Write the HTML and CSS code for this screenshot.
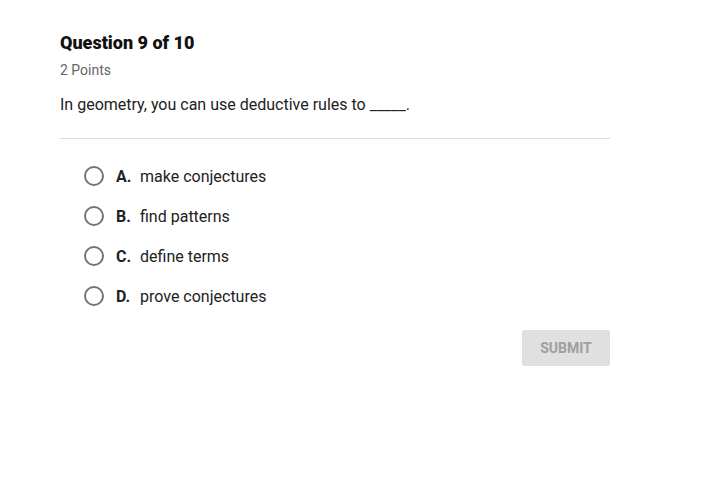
FILE: index.html
```html
<!DOCTYPE html>
<html>
<head>
<meta charset="utf-8">
<link rel="stylesheet" href="styles.css">
</head>
<body>
<div class="quiz">
  <h1 class="title">Question 9 of 10</h1>
  <div class="points">2 Points</div>
  <p class="prompt">In geometry, you can use deductive rules to _____.</p>
  <hr class="divider">
  <ul class="options">
    <li class="option"><span class="radio"></span><span class="letter">A.</span><span class="text">make conjectures</span></li>
    <li class="option"><span class="radio"></span><span class="letter">B.</span><span class="text">find patterns</span></li>
    <li class="option"><span class="radio"></span><span class="letter">C.</span><span class="text">define terms</span></li>
    <li class="option"><span class="radio"></span><span class="letter">D.</span><span class="text">prove conjectures</span></li>
  </ul>
  <div class="actions"><button class="submit">SUBMIT</button></div>
</div>
</body>
</html>
```
FILE: styles.css
```css
html, body { margin: 0; padding: 0; background: #fff; }
body { font-family: Roboto, "Liberation Sans", sans-serif; color: #212121; }
.quiz { width: 550px; padding: 32px 0 0 60px; }
.title { margin: 0; font-size: 18px; font-weight: 900; line-height: 22px; color: #111; }
.points { margin-top: 6px; font-size: 14px; line-height: 20px; color: #666; }
.prompt { margin: 14px 0 0; font-size: 16px; line-height: 22px; color: #222; }
.divider { margin: 22px 0 0; border: 0; border-top: 1px solid #ddd; height: 0; }
.options { list-style: none; margin: 17px 0 0; padding: 0 0 0 24px; }
.option { display: flex; align-items: center; height: 40px; font-size: 16px; }
.radio { width: 16px; height: 16px; border: 2px solid #757575; border-radius: 50%; box-sizing: content-box; margin-right: 12px; }
.letter { font-weight: 700; width: 24px; color: #222; }
.text { color: #222; }
.actions { display: flex; justify-content: flex-end; margin-top: 14px; }
.submit { width: 88px; height: 36px; border: 0; border-radius: 2px; background: #e0e0e0; color: #9e9e9e; font-family: Roboto, "Liberation Sans", sans-serif; font-size: 14px; font-weight: 700; padding: 0; }
```
